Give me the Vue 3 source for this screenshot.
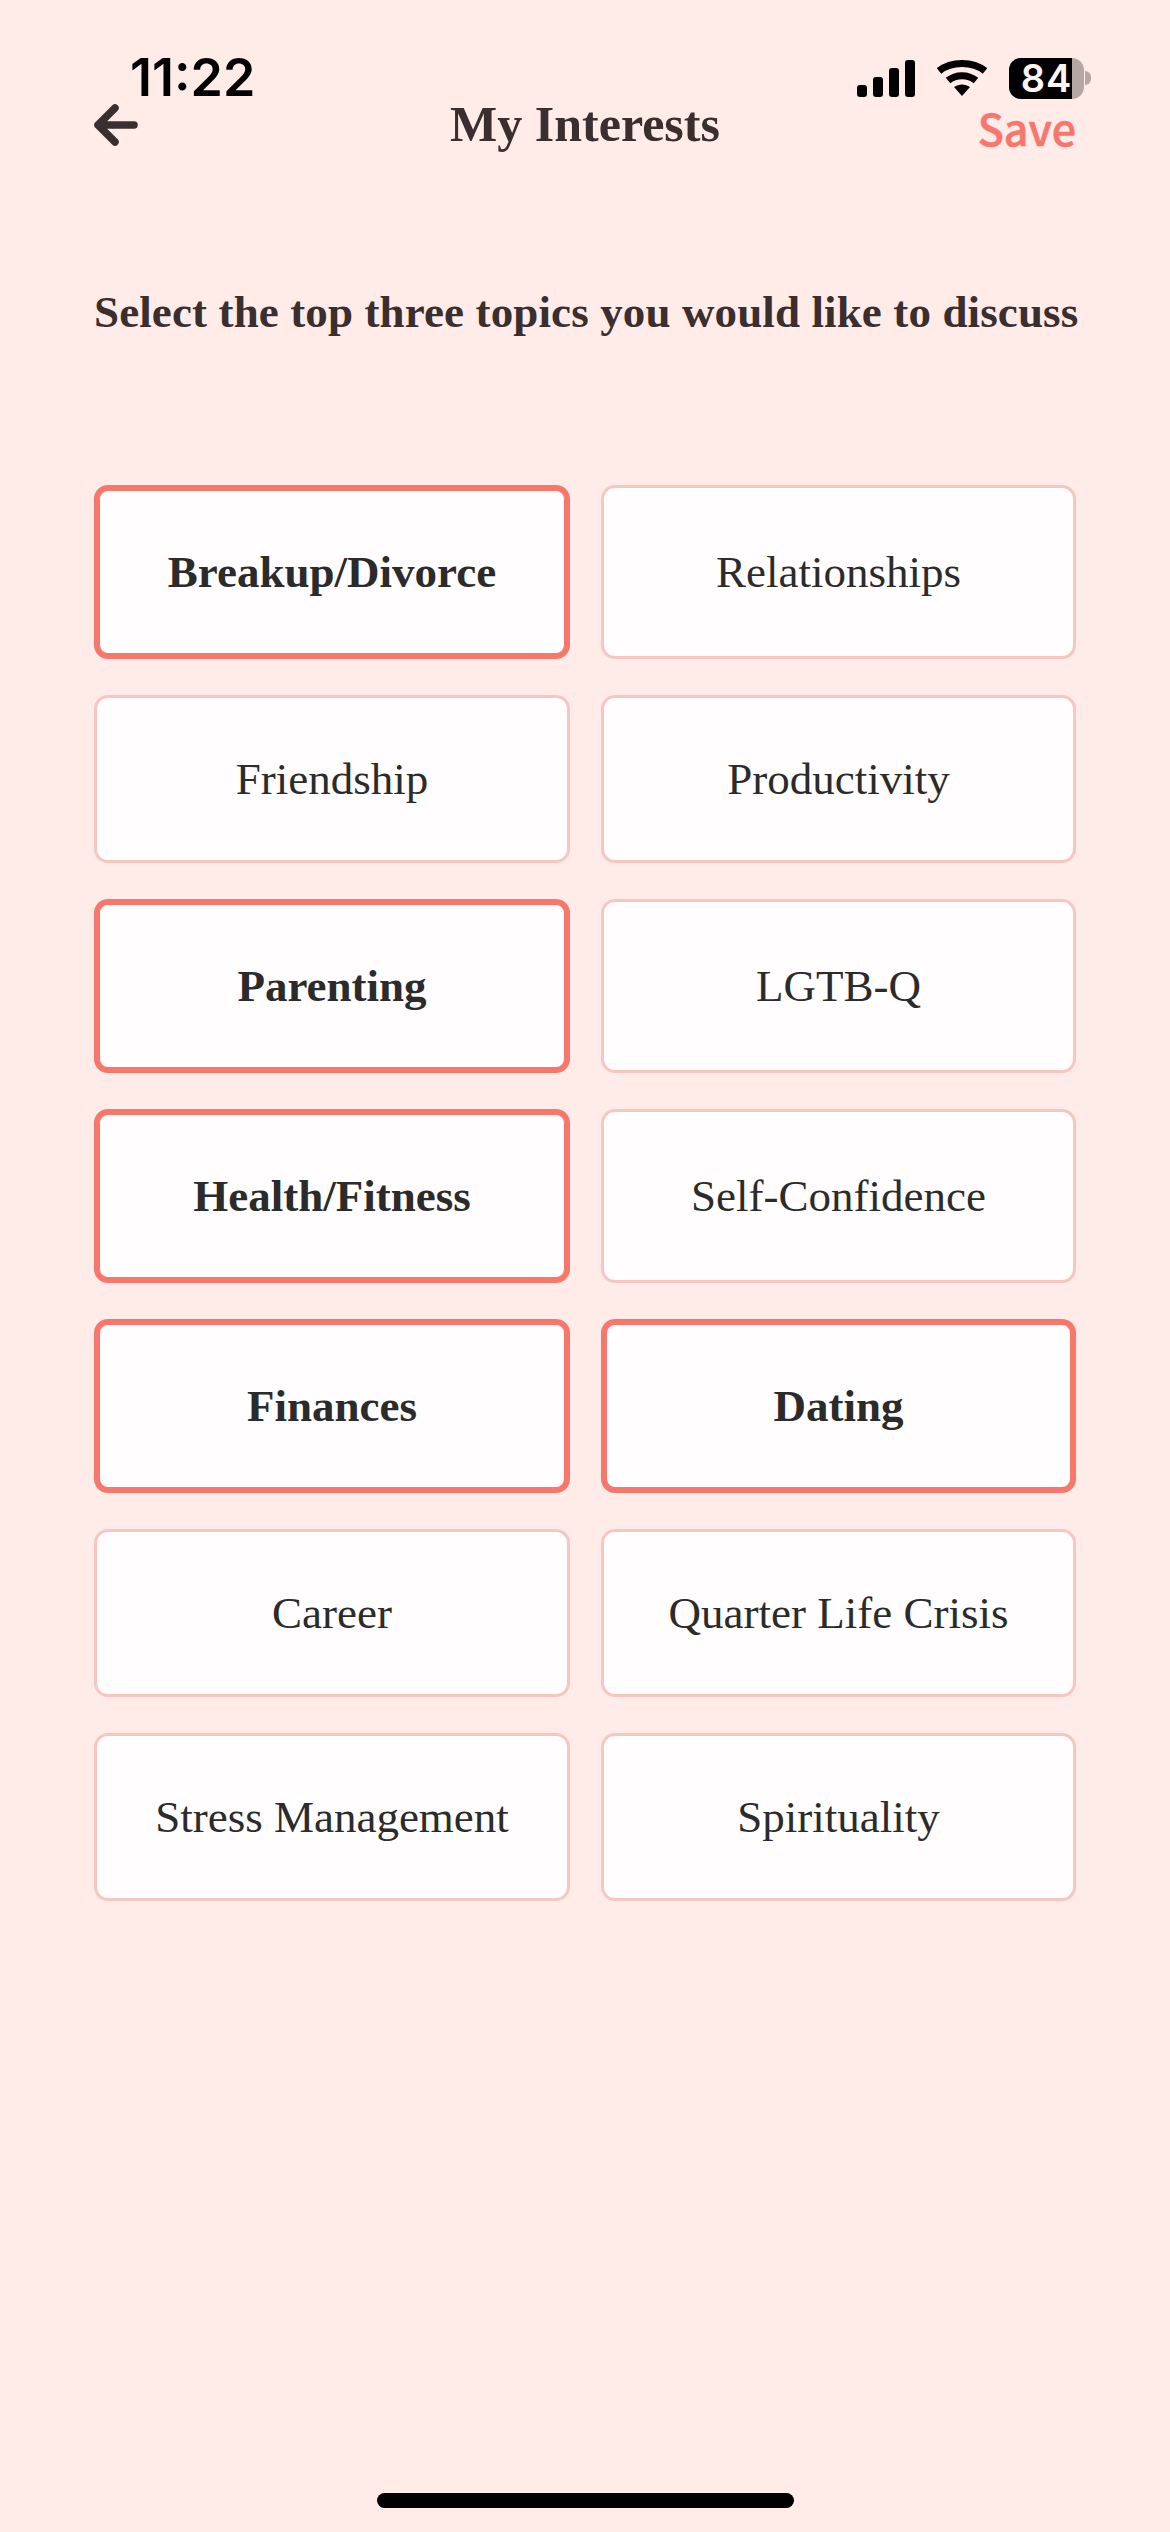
<script setup>
const topics = [
  { label: 'Breakup/Divorce', on: true },
  { label: 'Relationships', on: false },
  { label: 'Friendship', on: false },
  { label: 'Productivity', on: false },
  { label: 'Parenting', on: true },
  { label: 'LGTB-Q', on: false },
  { label: 'Health/Fitness', on: true },
  { label: 'Self-Confidence', on: false },
  { label: 'Finances', on: true },
  { label: 'Dating', on: true },
  { label: 'Career', on: false },
  { label: 'Quarter Life Crisis', on: false },
  { label: 'Stress Management', on: false },
  { label: 'Spirituality', on: false },
]
</script>

<template>
  <div class="screen">
    <div class="status">
      <span class="time">11:22</span>
      <div class="status-icons">
        <svg width="58" height="37" viewBox="0 0 58 37">
          <rect x="0" y="25" width="10" height="12" rx="3" fill="#000" />
          <rect x="16" y="17" width="10" height="20" rx="3" fill="#000" />
          <rect x="32" y="8" width="10" height="29" rx="3" fill="#000" />
          <rect x="48" y="0" width="10" height="37" rx="3" fill="#000" />
        </svg>
        <svg width="50" height="37" viewBox="0 0 50 37">
          <path d="M2 11 C14 1 36 1 48 11" fill="none" stroke="#000" stroke-width="7" />
          <path d="M11 20.5 C19 14 31 14 39 20.5" fill="none" stroke="#000" stroke-width="7" />
          <path d="M17 27 C22 23.5 28 23.5 33 27 L25 36 Z" fill="#000" />
        </svg>
        <div class="battery">
          <div class="battery-body">
            <div class="battery-level"></div>
            <span class="battery-text">84</span>
          </div>
          <div class="battery-cap"></div>
        </div>
      </div>
    </div>

    <header class="nav">
      <div class="side">
        <svg class="back" width="44" height="42" viewBox="0 0 44 42">
          <path d="M4 21 H40 M21 4 L4 21 L21 38" fill="none" stroke="#3a2e2e" stroke-width="7.5" stroke-linecap="round" stroke-linejoin="round" />
        </svg>
      </div>
      <h1 class="title">My Interests</h1>
      <div class="side side-end">
        <span class="save">Save</span>
      </div>
    </header>

    <p class="prompt">Select the top three topics you would like to discuss</p>

    <div class="grid">
      <div v-for="t in topics" :key="t.label" class="card" :class="{ on: t.on }">{{ t.label }}</div>
    </div>

    <div class="home-bar"></div>
  </div>
</template>

<style>
html, body { margin: 0; background: #ffece8; }
</style>

<style scoped>
.screen {
  position: relative;
  width: 1170px;
  height: 2532px;
  background: #ffece8;
  overflow: hidden;
  box-sizing: border-box;
  padding: 100px 94px 0 94px;
  font-family: "Liberation Serif", serif;
}
.status {
  position: absolute;
  top: 53px;
  left: 130px;
  width: 961px;
  height: 50px;
  display: flex;
  justify-content: space-between;
  align-items: center;
}
.time {
  font-family: Inter, sans-serif;
  font-weight: 600;
  font-size: 52px;
  color: #000;
  line-height: 50px;
}
.status-icons {
  display: flex;
  align-items: center;
  gap: 22px;
}
.battery { display: flex; align-items: center; gap: 1px; }
.battery-body {
  position: relative;
  width: 75px;
  height: 41px;
  border-radius: 12px;
  background: #b5a8a4;
  display: flex;
  align-items: center;
  justify-content: center;
}
.battery-level {
  position: absolute;
  left: 0;
  top: 0;
  bottom: 0;
  width: 63px;
  background: #000;
  border-radius: 12px 0 0 12px;
}
.battery-text {
  position: relative;
  font-family: Inter, sans-serif;
  font-weight: 600;
  font-size: 38px;
  letter-spacing: 1px;
  line-height: 41px;
  color: #fff6f3;
}
.battery-cap {
  width: 6px;
  height: 14px;
  background: #b5a8a4;
  border-radius: 0 7px 7px 0;
}
.nav {
  display: flex;
  align-items: center;
  height: 50px;
}
.side {
  flex: 1;
  display: flex;
  align-items: center;
}
.side-end { justify-content: flex-end; }
.back { display: block; }
.title {
  margin: 0 0 2px 0;
  font-size: 50px;
  font-weight: 700;
  color: #3a2e2e;
  line-height: 48px;
}
.save {
  font-family: "Noto Sans CJK SC", "Noto Sans", sans-serif;
  font-weight: 500;
  font-size: 43px;
  -webkit-text-stroke: 0.6px #f7776d;
  color: #f7776d;
  line-height: 40px;
  position: relative;
  top: 2px;
}
.prompt {
  margin: 137px 0 0 0;
  font-size: 45px;
  letter-spacing: 0.12px;
  font-weight: 700;
  color: #3a2e2e;
  line-height: 50px;
  text-align: center;
  white-space: nowrap;
}
.grid {
  margin-top: 148px;
  display: grid;
  grid-template-columns: 476px 475px;
  column-gap: 31px;
  row-gap: 36px;
}
.card {
  box-sizing: content-box;
  min-height: 162px;
  display: flex;
  align-items: center;
  justify-content: center;
  background: #fffdfd;
  border: 3px solid #f8c6c1;
  border-radius: 14px;
  font-size: 45px;
  line-height: 50px;
  color: #2b2b2b;
}
.card.on {
  border: 6px solid #f7776d;
  font-weight: 700;
}
.home-bar {
  position: absolute;
  left: 377px;
  bottom: 24px;
  width: 417px;
  height: 15px;
  border-radius: 8px;
  background: #000;
}
</style>
